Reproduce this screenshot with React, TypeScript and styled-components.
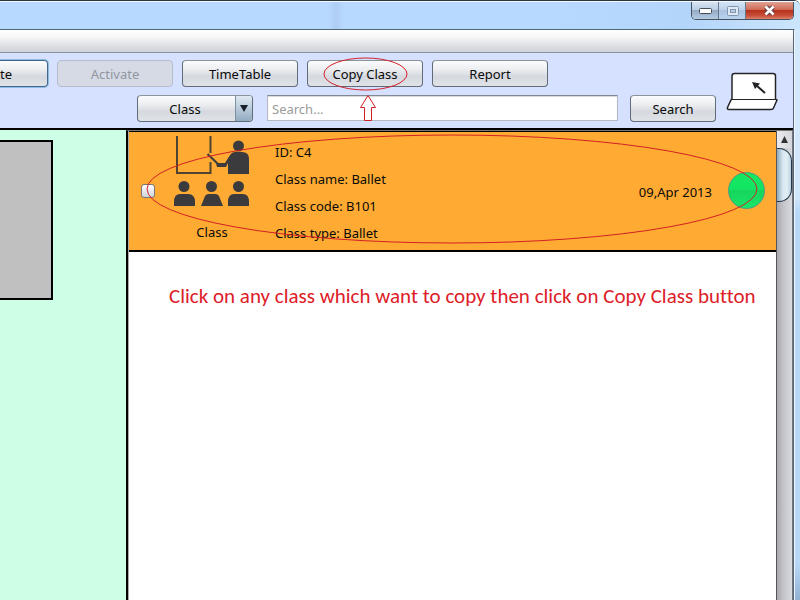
import React from "react";
import styled, { createGlobalStyle, css } from "styled-components";

const Global = createGlobalStyle`
  * { box-sizing: border-box; }
  body { margin: 0; font-family: "Comic Sans MS", "Noto Sans", sans-serif; font-size: 13px; color: #0a0a0a; }
  button, input, select { font: inherit; color: inherit; }
`;

const glossy = css`
  border: 1px solid #626c78;
  border-top-color: #8d939b;
  border-radius: 4px;
  background: linear-gradient(#fcfcfd, #ebedf0 35%, #d5d8de 62%, #dfe2e7);
`;

const Frame = styled.div`
  height: 100vh;
  display: flex;
  flex-direction: column;
  overflow: hidden;
  border-top: 1px solid #2b3442;
  border-top-right-radius: 6px;
  background: linear-gradient(#d3e8fb 30%, #cfe5fa 33%, #b9d8f8 35%, #b9d8f8 94%, #93b1d3);
`;

const TitleBar = styled.header`
  height: 28px;
  flex: none;
  display: flex;
  justify-content: flex-end;
  align-items: flex-start;
  padding-right: 6px;
  border-top: 1px solid #f4faff;
  background: linear-gradient(90deg, transparent 41%, #afcdf6 42%, transparent 43%), linear-gradient(90deg, #b7d9ff 70%, #b4d5fa 86%, #cbe5fc);
`;

const Controls = styled.div`
  display: flex;
  height: 18px;
  border: 1px solid #47515f;
  border-top: 0;
  border-radius: 0 0 5px 5px;
  overflow: hidden;
`;

const WindowButton = styled.button<{ $kind: "min" | "max" | "close" }>`
  width: ${(p) => (p.$kind === "close" ? 47 : 27)}px;
  padding: 0;
  display: grid;
  place-items: center;
  border: 0;
  border-right: ${(p) => (p.$kind === "close" ? "0" : "1px solid #66788d")};
  background: ${(p) =>
    p.$kind === "close"
      ? "linear-gradient(#e0a294, #cf6a56 45%, #b6301a 50%, #c8503a 80%, #dd8068)"
      : p.$kind === "max"
        ? "linear-gradient(#d3e4f6, #bdd3ec 45%, #aac4e1 50%, #b9d2ee)"
        : "linear-gradient(#d6e4f3, #bccfe3 45%, #95abc4 50%, #b4cbe4)"};
`;

const Client = styled.div`
  flex: 1;
  min-height: 0;
  display: flex;
  flex-direction: column;
  margin-right: 5px;
  border-top: 1px solid #4f6878;
  border-right: 1px solid #eff6ff;
  background: #d6e1ff;
`;

const ClientEdge = styled.div`
  flex: 1;
  min-height: 0;
  display: flex;
  flex-direction: column;
  border-right: 1px solid #566577;
`;

const MenuStrip = styled.div`
  height: 23px;
  flex: none;
  border-bottom: 1px solid #8d93a2;
  background: linear-gradient(#ffffff, #f7f7f8 30%, #dcdde1 75%, #d3d4d9);
`;

const Toolbar = styled.div`
  flex: none;
  display: flex;
  height: 77px;
  border-bottom: 2px solid #000;
`;

const ToolRows = styled.div`
  flex: 1;
  min-width: 0;
  display: flex;
  flex-direction: column;
  gap: 8px;
  padding-top: 7px;
`;

const ActionRow = styled.div`
  display: flex;
  gap: 9px;
`;

const Button = styled.button<{ $cut?: boolean; $small?: boolean }>`
  ${glossy}
  width: ${(p) => (p.$cut ? 48 : p.$small ? 86 : 116)}px;
  height: 27px;
  flex: none;
  padding: 0;
  &:disabled { color: #9297a2; border-color: #b5bccb; background: #d5dae5; }
  ${(p) =>
    p.$cut &&
    css`
      text-align: left;
      border-left: 0;
      border-radius: 0 4px 4px 0;
      border-color: #42688f;
      box-shadow: 0 0 0 1px #8dbbe2;
    `}
`;

const Circled = styled.div`
  position: relative;
  display: flex;
`;

const CopyMark = styled.svg`
  position: absolute;
  left: 16px;
  top: -3px;
  z-index: 2;
  pointer-events: none;
`;

const SearchRow = styled.div`
  display: flex;
  padding-left: 137px;
`;

const SelectBox = styled.div`
  position: relative;
  width: 116px;
  margin-right: 14px;
  flex: none;
`;

const Select = styled.select`
  ${glossy}
  appearance: none;
  width: 100%;
  height: 27px;
  padding: 0 20px 0 0;
  text-align-last: center;
`;

const SelectArrow = styled.span`
  position: absolute;
  top: 1px;
  right: 1px;
  bottom: 1px;
  width: 17px;
  display: grid;
  place-items: center;
  border-left: 1px solid #7a90a4;
  border-radius: 0 3px 3px 0;
  background: linear-gradient(#dfe9f2, #b9cbda 50%, #93abc0);
  pointer-events: none;
`;

const SearchInput = styled.input`
  flex: 1;
  min-width: 0;
  height: 26px;
  margin-right: 12px;
  padding: 2px 4px 0;
  border: 1px solid #b4b9c3;
  border-top-color: #838994;
  background: #fff;
  box-shadow: inset 0 1px 1px #d8d8dc;
  &::placeholder { color: #9b9b9b; opacity: 1; }
`;

const Laptop = styled.svg`
  flex: none;
  margin: 19px 15px 0 10px;
`;

const Body = styled.main`
  flex: 1;
  min-height: 0;
  display: flex;
`;

const SidePanel = styled.aside`
  width: 126px;
  flex: none;
  padding-top: 10px;
  background: #ccffe6;
`;

const Preview = styled.div`
  width: 53px;
  height: 160px;
  border: 2px solid #000;
  border-left: 0;
  background: #c0c0c0;
`;

const Content = styled.section`
  flex: 1;
  min-width: 0;
  display: flex;
  border-left: 2px solid #000;
  border-top: 1px solid #777;
  background: #fff;
`;

const List = styled.div`
  flex: 1;
  min-width: 0;
  border-left: 1px solid #aaa;
`;

const ClassRow = styled.article`
  position: relative;
  display: flex;
  align-items: center;
  height: 121px;
  padding: 0 11px 0 12px;
  border-top: 1px solid #000;
  border-bottom: 2px solid #000;
  background: #ffab33;
`;

const Check = styled.input`
  appearance: none;
  width: 14px;
  height: 14px;
  flex: none;
  margin: 0 18px 0 0;
  border: 1px solid #777;
  border-radius: 3px;
  background: linear-gradient(#fff, #d0d3da);
`;

const Kind = styled.figure`
  align-self: flex-start;
  width: 78px;
  margin: 3px 24px 0 0;
  display: flex;
  flex-direction: column;
  align-items: center;
  gap: 16px;
  line-height: 20px;
`;

const Details = styled.div`
  flex: 1;
  align-self: flex-start;
  padding-top: 7px;
  line-height: 27px;
`;

const When = styled.time`
  margin: 2px 16px 0 0;
`;

const Status = styled.span`
  width: 37px;
  height: 37px;
  margin-top: -2px;
  border: 1px solid #4b9c80;
  border-radius: 50%;
  background: linear-gradient(#14e85f, #12e564 45%, #17d55c 52%, #18e668);
`;

const RowMark = styled.svg`
  position: absolute;
  left: 17px;
  top: 2px;
  width: calc(100% - 35px);
  height: 110px;
  pointer-events: none;
`;

const Hint = styled.p`
  margin: 31px 12px 0 40px;
  font-family: Calibri, Carlito, Lato, sans-serif;
  font-size: 21px;
  font-variant-ligatures: none;
  line-height: 26px;
  color: #dd2028;
  white-space: nowrap;
`;

const Scrollbar = styled.div`
  width: 17px;
  flex: none;
  border-left: 1px solid #56565b;
  border-right: 1px solid #73777e;
  background: linear-gradient(90deg, #a9a9ad, #c5c6cb 45%, #d9dae2);
`;

const ScrollUp = styled.button`
  display: grid;
  place-items: center;
  width: 100%;
  height: 17px;
  padding: 0;
  border: 0;
  background: linear-gradient(90deg, #e9eaed, #d5d7dc);
`;

const Thumb = styled.div`
  height: 54px;
  border: 1px solid #26384a;
  border-left: 0;
  border-radius: 0 13px 13px 0;
  background: linear-gradient(90deg, #8da9bd, #d6e6f0 40%, #e3eff6 70%, #b9d0e0);
`;

const RED = "#d31f26";

function ClassIcon() {
  return (
    <svg width="78" height="71" viewBox="0 0 78 71" aria-hidden="true" fill="#3b3b3d">
      <path d="M4 1V38H37.500V27M37.500 1V18" fill="none" stroke="#4f422f" strokeWidth="2" />
      <circle cx="65.500" cy="11" r="5.500" />
      <path d="M34.500 19L45 29" fill="none" stroke="#3b3b3d" strokeWidth="2" />
      <path d="M43 28H52L57 20Q59 17 62 17H69Q76 17 76 24V39H55V28L53 32H44Z" />
      <circle cx="11" cy="51.500" r="5.500" />
      <path d="M1 71V67Q1 59 7 59H15Q22 59 22 67V71Z" />
      <circle cx="38.500" cy="51.500" r="5.500" />
      <path d="M28 71L32 61Q33 59 36 59H42Q45 59 46 61L50 71Z" />
      <circle cx="65.500" cy="51.500" r="5.500" />
      <path d="M55 71V67Q55 59 61 59H70Q76 59 76 67V71Z" />
    </svg>
  );
}

export default function App() {
  return (
    <Frame>
      <Global />
      <TitleBar>
        <Controls>
          <WindowButton $kind="min" aria-label="Minimize">
            <svg width="13" height="7"><rect x="0.500" y="1.500" width="12" height="5" rx="1" fill="#fff" stroke="#454d5b" /></svg>
          </WindowButton>
          <WindowButton $kind="max" aria-label="Maximize">
            <svg width="13" height="10" fill="none" stroke="#8496ae">
              <rect x="1.500" y="0.500" width="11" height="9" rx="1" fill="#dfeaf6" />
              <rect x="4.500" y="3.500" width="5" height="3" fill="#b6cae1" />
            </svg>
          </WindowButton>
          <WindowButton $kind="close" aria-label="Close">
            <svg width="13" height="11" viewBox="0 0 13 11">
              <path d="M3 2L10 9M10 2L3 9" stroke="#66404a" strokeWidth="5" />
              <path d="M2.500 1.500L10.500 9.500M10.500 1.500L2.500 9.500" stroke="#fff" strokeWidth="2.500" />
            </svg>
          </WindowButton>
        </Controls>
      </TitleBar>
      <Client>
        <ClientEdge>
          <MenuStrip />
          <Toolbar>
            <ToolRows>
              <ActionRow>
                <Button $cut>te</Button>
                <Button disabled>Activate</Button>
                <Button>TimeTable</Button>
                <Circled>
                  <Button>Copy Class</Button>
                  <CopyMark width="86" height="66" fill="none" stroke={RED} aria-hidden="true">
                    <ellipse cx="42.500" cy="17" rx="41.500" ry="16" />
                    <path d="M45 38.500L52.500 50.500H48.500V63.500H41.500V50.500H37.500Z" />
                  </CopyMark>
                </Circled>
                <Button>Report</Button>
              </ActionRow>
              <SearchRow>
                <SelectBox>
                  <Select aria-label="Search in"><option>Class</option></Select>
                  <SelectArrow>
                    <svg width="8" height="8"><path d="M0 0H8L4 7Z" fill="#16202a" /></svg>
                  </SelectArrow>
                </SelectBox>
                <SearchInput type="text" aria-label="Search" placeholder="Search..." />
                <Button $small>Search</Button>
              </SearchRow>
            </ToolRows>
            <Laptop width="52" height="40" viewBox="0 0 52 40" fill="#fff" stroke="#242428" strokeWidth="1.500" aria-label="Laptop">
              <path d="M6 27V4Q6 1.500 8.500 1.500H47Q49.500 1.500 49.500 4V27L51 28L47.500 36Q47 37.500 45 37.500H3Q1 37.500 1.500 35.500L5 28Z" />
              <path d="M5 27.500H50" strokeWidth="1" />
              <path d="M39 21L30 13" strokeWidth="2" />
              <path d="M26 10L34 11.500L29 17Z" fill="#242428" stroke="none" />
            </Laptop>
          </Toolbar>
          <Body>
            <SidePanel><Preview /></SidePanel>
            <Content>
              <List>
                <ClassRow>
                  <Check type="checkbox" aria-label="Select class C4" />
                  <Kind>
                    <ClassIcon />
                    <figcaption>Class</figcaption>
                  </Kind>
                  <Details>
                    <div>ID: C4</div>
                    <div>Class name: Ballet</div>
                    <div>Class code: B101</div>
                    <div>Class type: Ballet</div>
                  </Details>
                  <When>09,Apr 2013</When>
                  <Status />
                  <RowMark viewBox="0 0 612 110" preserveAspectRatio="none" fill="none" stroke={RED} aria-hidden="true">
                    <ellipse cx="306" cy="55" rx="305" ry="54" vectorEffect="non-scaling-stroke" />
                  </RowMark>
                </ClassRow>
                <Hint>Click on any class which want to copy then click on Copy Class button</Hint>
              </List>
              <Scrollbar>
                <ScrollUp aria-label="Scroll up">
                  <svg width="7" height="7"><path d="M0 7L3.500 0L7 7Z" fill="#333" /></svg>
                </ScrollUp>
                <Thumb />
              </Scrollbar>
            </Content>
          </Body>
        </ClientEdge>
      </Client>
    </Frame>
  );
}
